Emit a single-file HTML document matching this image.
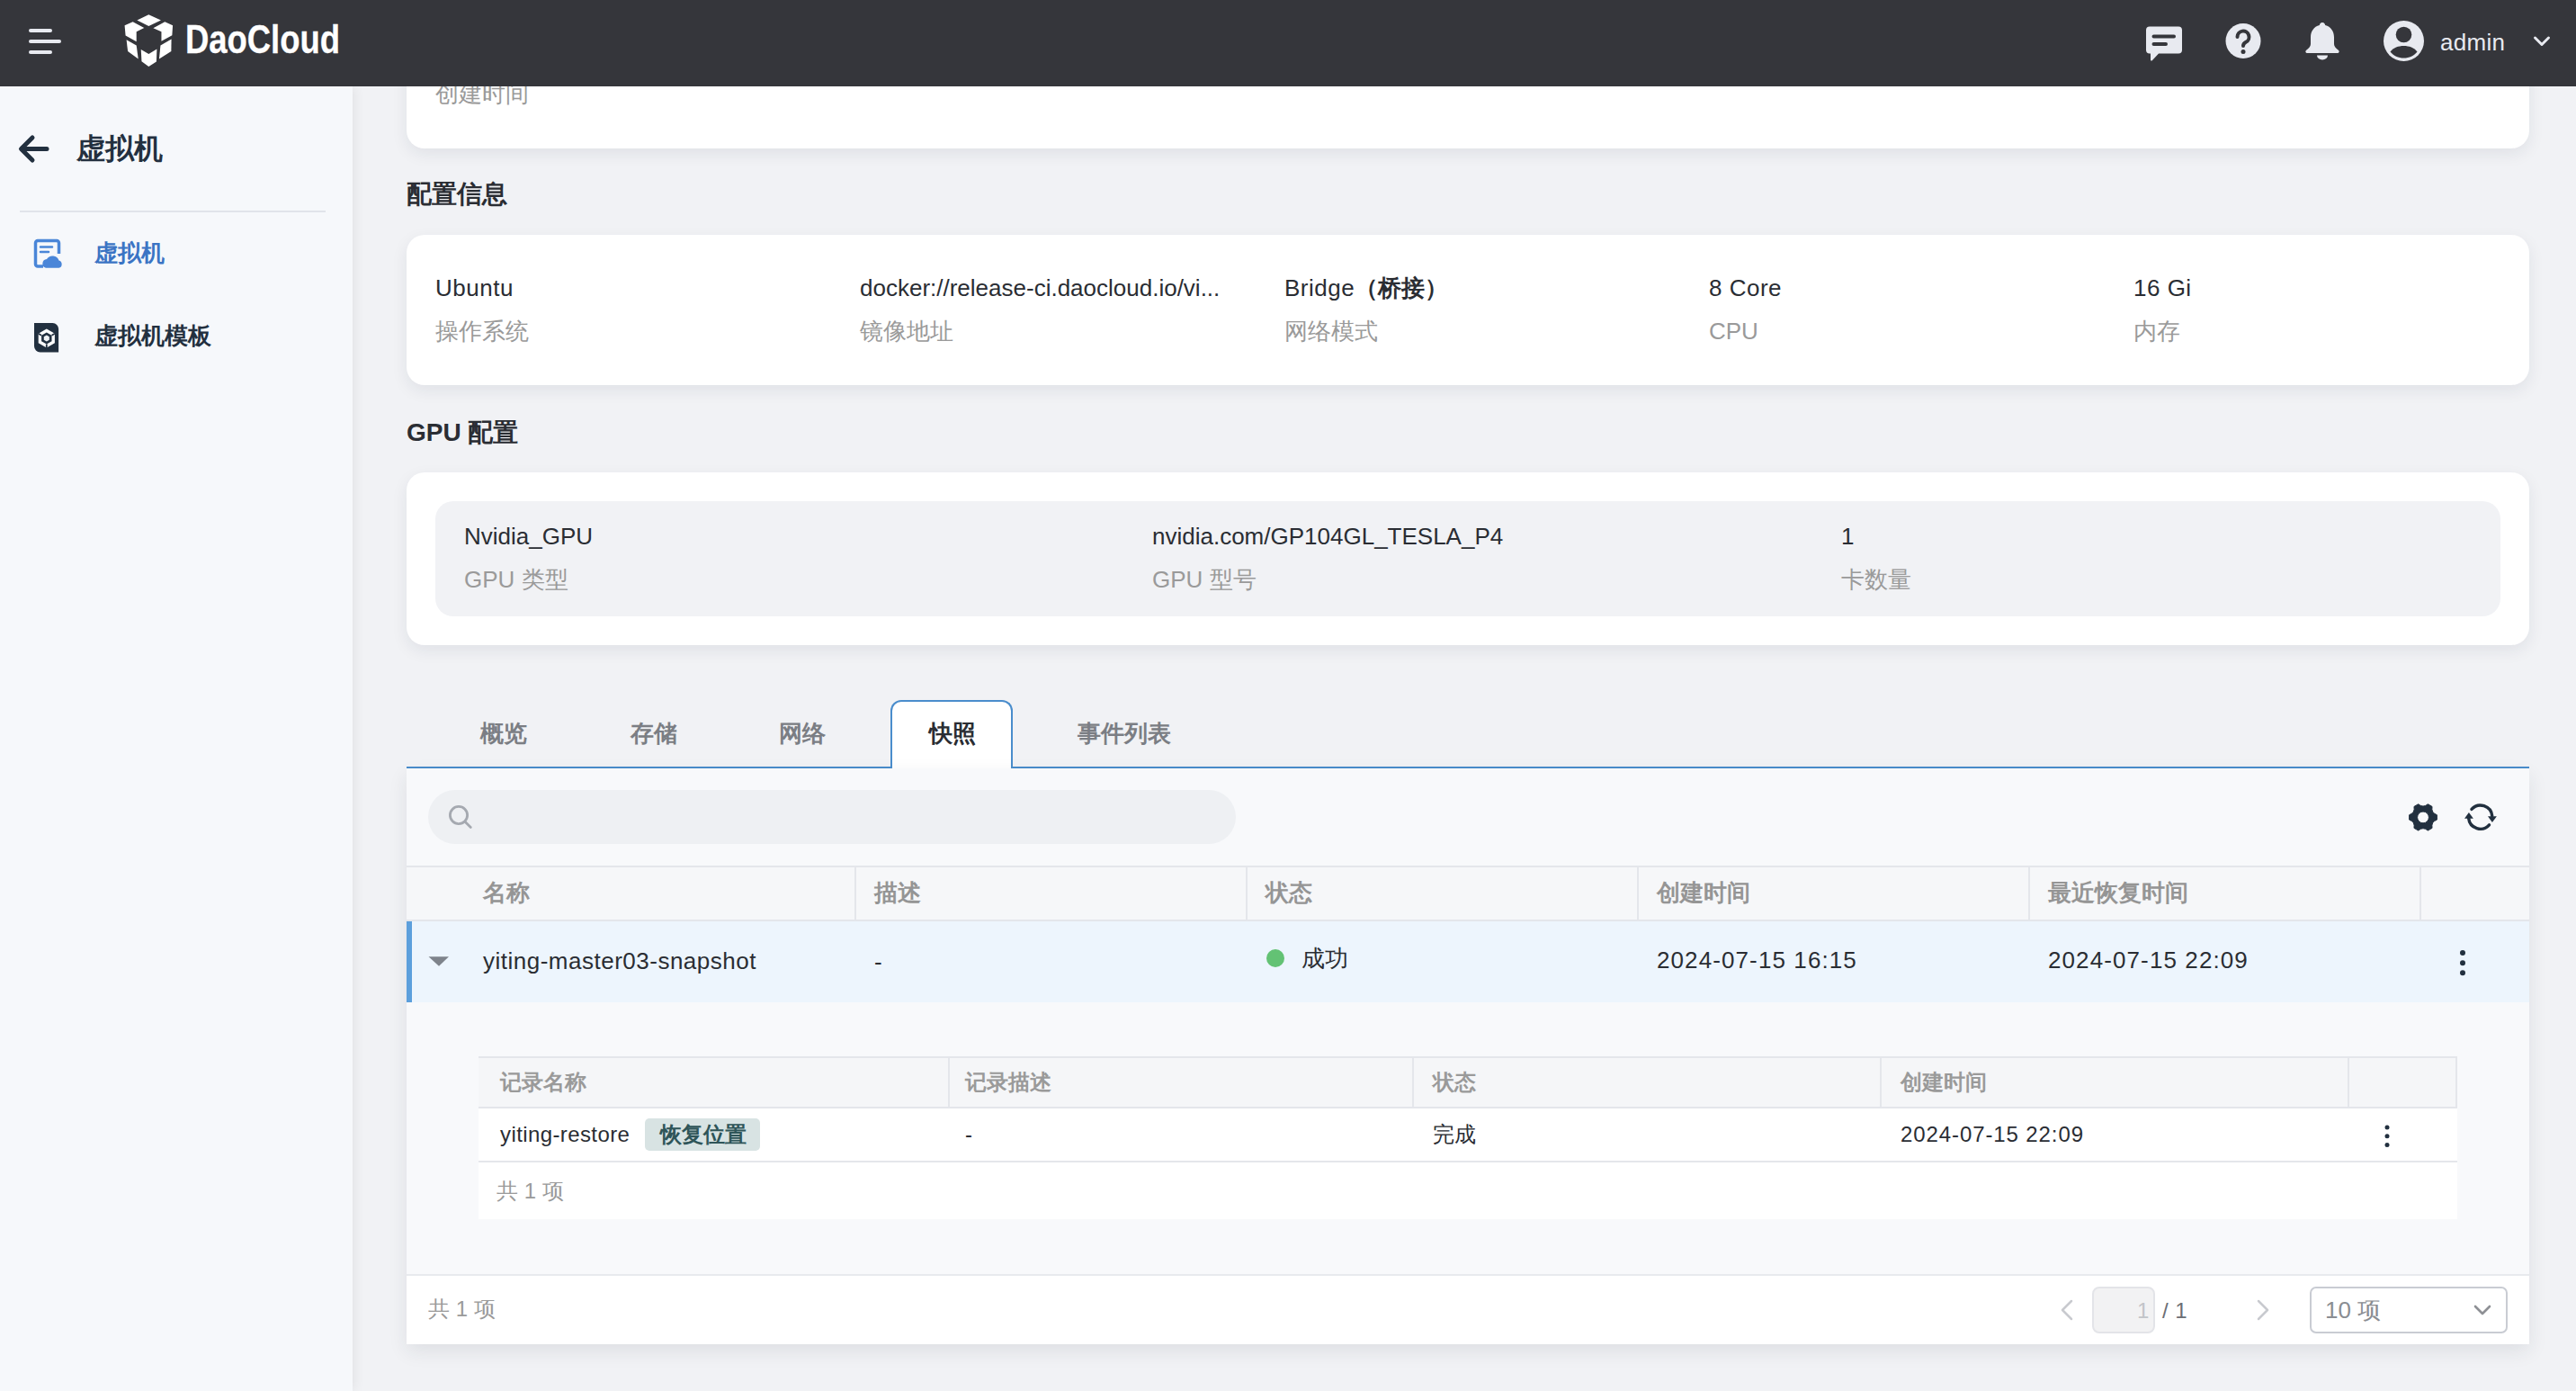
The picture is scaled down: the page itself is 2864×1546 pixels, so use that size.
<!DOCTYPE html>
<html><head><meta charset="utf-8">
<style>
*{box-sizing:border-box;margin:0;padding:0}
html,body{width:2864px;height:1546px;overflow:hidden}
body{position:relative;background:#f1f2f5;font-family:"Liberation Sans",sans-serif;color:#2a2d33}
.abs{position:absolute}
svg{position:absolute;overflow:visible}
#hdr{left:0;top:0;width:2864px;height:96px;background:#35363b;z-index:5}
#side{left:0;top:96px;width:392px;height:1450px;background:#f6f8fb;box-shadow:2px 0 12px rgba(0,0,0,.07);z-index:3}
.card{position:absolute;left:452px;width:2360px;background:#fff;border-radius:20px;box-shadow:0 6px 18px rgba(30,40,60,.08)}
.t{position:absolute;white-space:nowrap;line-height:1}
.title{font-size:28px;font-weight:bold;color:#2a2d33}
.val{font-size:26px;color:#2a2d33;letter-spacing:.5px}
.lab{font-size:26px;color:#9a9a9a}
.tab{position:absolute;top:802px;font-size:26px;font-weight:bold;color:#7b7e84;line-height:1;white-space:nowrap}
.th{position:absolute;font-size:26px;font-weight:bold;color:#959595;line-height:1;white-space:nowrap}
.td{position:absolute;font-size:26px;color:#2a2d33;line-height:1;white-space:nowrap}
</style></head>
<body>
<!-- HEADER -->
<div id="hdr" class="abs">
  <div class="abs" style="left:32px;top:32px;width:26px;height:4px;background:#e8eaf0;border-radius:2px"></div>
  <div class="abs" style="left:32px;top:44px;width:36px;height:4px;background:#e8eaf0;border-radius:2px"></div>
  <div class="abs" style="left:32px;top:56px;width:26px;height:4px;background:#e8eaf0;border-radius:2px"></div>
  <!-- logo cube -->
  <svg style="left:130px;top:10px" width="260" height="75" viewBox="0 0 2576 743">
    <g fill="#fff">
      <polygon points="222,125 350,62 485,125 350,188"/>
      <polygon points="85,182 175,140 300,208 215,250 215,358 95,292"/>
      <polygon points="400,210 528,142 615,182 608,290 490,355 490,250"/>
      <polygon points="105,340 215,402 235,550 120,465"/>
      <polygon points="600,332 480,402 465,550 598,465"/>
      <polygon points="265,445 350,495 440,440 435,580 350,635 272,578"/>
    </g>
  </svg>
  <svg style="left:206px;top:20px" width="174" height="50">
    <text x="0" y="39" font-family="Liberation Sans" font-weight="bold" font-size="45" fill="#fff" stroke="#fff" stroke-width="0.3" textLength="172" lengthAdjust="spacingAndGlyphs">DaoCloud</text>
  </svg>
  <!-- chat -->
  <svg style="left:2386px;top:29px" width="40" height="40" viewBox="0 0 40 40">
    <path d="M4 0.5h32a4 4 0 0 1 4 4v22a4 4 0 0 1-4 4H14l-7 7.5c-1 1-2 .5-2-.8V30.5H4a4 4 0 0 1-4-4v-22a4 4 0 0 1 4-4z" fill="#e8eaf0"/>
    <path d="M8.5 11.5H31M8.5 20H22" stroke="#35363b" stroke-width="4" stroke-linecap="round"/>
  </svg>
  <!-- help -->
  <svg style="left:2474px;top:26px" width="40" height="40" viewBox="0 0 40 40">
    <circle cx="20" cy="19.5" r="19.5" fill="#e8eaf0"/>
    <path d="M13.5 15a6.5 6.5 0 1 1 9.5 5.8c-2 1.1-3 2.2-3 4.2" fill="none" stroke="#35363b" stroke-width="4" stroke-linecap="round"/>
    <circle cx="20" cy="31.5" r="2.5" fill="#35363b"/>
  </svg>
  <!-- bell -->
  <svg style="left:2563px;top:25px" width="38" height="42" viewBox="0 0 38 42">
    <path d="M19 0c2 0 3 1.5 3.2 3C28.5 4.5 32 10 32 16.5v7.5c0 2.5 2 4.5 4.5 6.5 2 1.5 1.2 3.5-1 3.5H2.5c-2.2 0-3-2-1-3.5C4 28.5 6 26.5 6 24v-7.5C6 10 9.5 4.5 15.8 3 16 1.5 17 0 19 0z" fill="#e8eaf0"/>
    <path d="M13 36.5h12a6 5 0 0 1-12 0z" fill="#e8eaf0"/>
  </svg>
  <!-- user -->
  <svg style="left:2650px;top:23px" width="46" height="46" viewBox="0 0 46 46">
    <circle cx="22.5" cy="22.5" r="22.5" fill="#e8eaf0"/>
    <circle cx="22.5" cy="15.5" r="8.8" fill="#35363b"/>
    <path d="M7.5 34.5C11 30 16.5 28 22.5 28s11.5 2 15 6.5C34 39 28.5 41.5 22.5 41.5S11 39 7.5 34.5z" fill="#35363b"/>
  </svg>
  <div class="t" style="left:2713px;top:34px;font-size:26px;letter-spacing:.3px;color:#e8eaf0">admin</div>
  <svg style="left:2815px;top:38px" width="22" height="16" viewBox="0 0 22 16">
    <path d="M3.5 4l7.5 7.5L18.5 4" fill="none" stroke="#e8eaf0" stroke-width="3" stroke-linecap="round" stroke-linejoin="round"/>
  </svg>
</div>

<!-- SIDEBAR -->
<div id="side" class="abs">
  <svg style="left:15px;top:44px" width="60" height="50" viewBox="0 0 60 50">
    <path d="M21 13L8.5 25.5 21 38M9 25.5h28" fill="none" stroke="#22303f" stroke-width="5" stroke-linecap="round" stroke-linejoin="round"/>
  </svg>
  <div class="t" style="left:85px;top:53px;font-size:32px;font-weight:bold;color:#23303f">虚拟机</div>
  <div class="abs" style="left:22px;top:138px;width:340px;height:2px;background:#e1e4ea"></div>
  <svg style="left:38px;top:170px" width="30" height="32" viewBox="0 0 30 32">
    <path d="M10 30H4a2.5 2.5 0 0 1-2.5-2.5V4A2.5 2.5 0 0 1 4 1.5h21A2.5 2.5 0 0 1 27.5 4v12" fill="none" stroke="#4a86d8" stroke-width="3.5"/>
    <path d="M7 8.5h13M7 14h9" stroke="#4a86d8" stroke-width="2.5" stroke-linecap="round"/>
    <path d="M13 31.8a5 5 0 0 1 1-9.8 7.5 7.5 0 0 1 13.5 1.5 4.3 4.3 0 0 1 0 8.3z" fill="#4a86d8"/>
  </svg>
  <div class="t" style="left:105px;top:172px;font-size:26px;font-weight:bold;color:#3b74c4">虚拟机</div>
  <svg style="left:38.2px;top:262.5px" width="28" height="34" viewBox="0 0 28 34">
    <path d="M0 0h20.5a6.6 6.6 0 0 1 6.6 6.6V32.4H6.6A6.6 6.6 0 0 1 0 25.8z" fill="#22303f"/>
    <polygon points="13.80,6.50 22.89,11.75 22.89,22.25 13.80,27.50 4.71,22.25 4.71,11.75" fill="#fff"/>
    <polygon points="13.80,10.40 19.52,13.70 19.52,20.30 13.80,23.60 8.08,20.30 8.08,13.70" fill="#22303f"/>
    <polygon points="13.80,13.50 16.83,15.25 16.83,18.75 13.80,20.50 10.77,18.75 10.77,15.25" fill="#f1f3f6"/>
    <path d="M13.8 23.6V28M8.08 13.70L4.71 11.75M19.52 13.70L22.89 11.75" stroke="#22303f" stroke-width="1.8"/>
  </svg>
  <div class="t" style="left:105px;top:264px;font-size:26px;font-weight:bold;color:#23303f">虚拟机模板</div>
</div>

<!-- CARDS -->
<div class="card" style="top:40px;height:125px">
  <div class="t lab" style="left:32px;top:51px">创建时间</div>
</div>
<div class="t title" style="left:452px;top:202px">配置信息</div>
<div class="card" style="top:261px;height:167px">
  <div class="t val" style="left:32px;top:46px">Ubuntu</div>
  <div class="t lab" style="left:32px;top:94px">操作系统</div>
  <div class="t val" style="left:504px;top:46px;letter-spacing:0">docker://release-ci.daocloud.io/vi...</div>
  <div class="t lab" style="left:504px;top:94px">镜像地址</div>
  <div class="t val" style="left:976px;top:46px">Bridge<span style="font-weight:bold;letter-spacing:0">（桥接）</span></div>
  <div class="t lab" style="left:976px;top:94px">网络模式</div>
  <div class="t val" style="left:1448px;top:46px">8 Core</div>
  <div class="t lab" style="left:1448px;top:94px">CPU</div>
  <div class="t val" style="left:1920px;top:46px">16 Gi</div>
  <div class="t lab" style="left:1920px;top:94px">内存</div>
</div>
<div class="t title" style="left:452px;top:467px">GPU 配置</div>
<div class="card" style="top:525px;height:192px">
  <div class="abs" style="left:32px;top:32px;width:2296px;height:128px;background:#f1f2f5;border-radius:20px"></div>
  <div class="t val" style="left:64px;top:58px;letter-spacing:0">Nvidia_GPU</div>
  <div class="t lab" style="left:64px;top:106px">GPU 类型</div>
  <div class="t val" style="left:829px;top:58px;letter-spacing:0">nvidia.com/GP104GL_TESLA_P4</div>
  <div class="t lab" style="left:829px;top:106px">GPU 型号</div>
  <div class="t val" style="left:1595px;top:58px">1</div>
  <div class="t lab" style="left:1595px;top:106px">卡数量</div>
</div>

<!-- TABS -->
<div class="abs" style="left:452px;top:852px;width:2360px;height:2px;background:#4a8dcc"></div>
<div class="abs" style="left:990px;top:778px;width:136px;height:76px;background:#fff;border:2px solid #4a8dcc;border-bottom:none;border-radius:12px 12px 0 0"></div>
<div class="tab" style="left:534px">概览</div>
<div class="tab" style="left:701px">存储</div>
<div class="tab" style="left:866px">网络</div>
<div class="tab" style="left:1033px;color:#2a2d33">快照</div>
<div class="tab" style="left:1198px">事件列表</div>

<!-- PANEL -->
<div id="panel" class="abs" style="left:452px;top:854px;width:2360px;height:640px;background:#f8f9fb;box-shadow:0 8px 20px rgba(30,40,60,.09)">
  <div class="abs" style="left:24px;top:24px;width:898px;height:60px;background:#eef0f3;border-radius:30px"></div>
  <svg style="left:44px;top:40px" width="32" height="32" viewBox="0 0 32 32">
    <circle cx="14" cy="12" r="9.6" fill="none" stroke="#a5a9b0" stroke-width="2.8"/>
    <path d="M21 19.2l6.3 6.3" stroke="#a5a9b0" stroke-width="2.8" stroke-linecap="round"/>
  </svg>
  <!-- gear -->
  <svg style="left:2226px;top:39px" width="32" height="32" viewBox="0 0 32 32">
    <path fill="#22303f" fill-rule="evenodd" stroke="#22303f" stroke-width="1" stroke-linejoin="round" d="M31.36 12.69 L31.36 18.11 Q24.66 20.40 26.03 27.35 L21.34 30.06 Q16.00 25.40 10.66 30.06 L5.97 27.35 Q7.34 20.40 0.64 18.11 L0.64 12.69 Q7.34 10.40 5.97 3.45 L10.66 0.74 Q16.00 5.40 21.34 0.74 L26.03 3.45 Q24.66 10.40 31.36 12.69Z M22.4 15.4A6.4 6.4 0 1 0 9.6 15.4A6.4 6.4 0 1 0 22.4 15.4Z"/>
  </svg>
  <!-- refresh -->
  <svg style="left:2288px;top:39px" width="36" height="32" viewBox="0 0 36 32">
    <path d="M7.96 6.38A13.1 13.1 0 0 1 30.73 13.78" fill="none" stroke="#22303f" stroke-width="3.4" stroke-linecap="round"/>
    <path d="M27.51 23.83A13.1 13.1 0 0 1 4.67 16.52" fill="none" stroke="#22303f" stroke-width="3.4" stroke-linecap="round"/>
    <path d="M0 16.8h9.9l-5-6.8z" fill="#22303f"/>
    <path d="M26 14.3h9.9l-5 6.7z" fill="#22303f"/>
  </svg>
  <!-- table header -->
  <div class="abs" style="left:0;top:108px;width:2360px;height:62px;background:#f6f7f9;border-top:2px solid #e4e6eb;border-bottom:2px solid #e4e6eb"></div>
  <div class="abs" style="left:498px;top:110px;width:2px;height:58px;background:#e4e6eb"></div>
  <div class="abs" style="left:933px;top:110px;width:2px;height:58px;background:#e4e6eb"></div>
  <div class="abs" style="left:1368px;top:110px;width:2px;height:58px;background:#e4e6eb"></div>
  <div class="abs" style="left:1803px;top:110px;width:2px;height:58px;background:#e4e6eb"></div>
  <div class="abs" style="left:2238px;top:110px;width:2px;height:58px;background:#e4e6eb"></div>
  <div class="th" style="left:85px;top:125px">名称</div>
  <div class="th" style="left:520px;top:125px">描述</div>
  <div class="th" style="left:955px;top:125px">状态</div>
  <div class="th" style="left:1390px;top:125px">创建时间</div>
  <div class="th" style="left:1825px;top:125px">最近恢复时间</div>
  <!-- main row -->
  <div class="abs" style="left:0;top:170px;width:2360px;height:90px;background:#edf5fd"></div>
  <div class="abs" style="left:0;top:170px;width:6px;height:90px;background:#5c9fdc"></div>
  <svg style="left:24px;top:208px" width="24" height="12" viewBox="0 0 24 12"><path d="M0.5 1.2h22.5l-11 10.6z" fill="#7e838b"/></svg>
  <div class="td" style="left:85px;top:201px;letter-spacing:.5px">yiting-master03-snapshot</div>
  <div class="td" style="left:520px;top:202px">-</div>
  <svg style="left:956px;top:201px" width="20" height="20" viewBox="0 0 20 20"><circle cx="10" cy="10" r="10" fill="#63c274"/></svg>
  <div class="td" style="left:995px;top:198px">成功</div>
  <div class="td" style="left:1390px;top:200px;letter-spacing:1.1px">2024-07-15 16:15</div>
  <div class="td" style="left:1825px;top:200px;letter-spacing:1.1px">2024-07-15 22:09</div>
  <svg style="left:2280px;top:201px" width="12" height="30" viewBox="0 0 12 30"><circle cx="6" cy="4" r="3" fill="#22303f"/><circle cx="6" cy="15.2" r="3" fill="#22303f"/><circle cx="6" cy="26.3" r="3" fill="#22303f"/></svg>
  <!-- sub table -->
  <div class="abs" style="left:80px;top:320px;width:2200px;height:58px;background:#f5f6f8;border-top:2px solid #e4e6eb;border-bottom:2px solid #e4e6eb;border-right:2px solid #e4e6eb"></div>
  <div class="abs" style="left:602px;top:322px;width:2px;height:54px;background:#e4e6eb"></div>
  <div class="abs" style="left:1118px;top:322px;width:2px;height:54px;background:#e4e6eb"></div>
  <div class="abs" style="left:1638px;top:322px;width:2px;height:54px;background:#e4e6eb"></div>
  <div class="abs" style="left:2158px;top:322px;width:2px;height:54px;background:#e4e6eb"></div>
  <div class="abs" style="left:80px;top:378px;width:2200px;height:60px;background:#fff;border-bottom:2px solid #e4e6eb"></div>
  <div class="abs" style="left:80px;top:438px;width:2200px;height:63px;background:#fff"></div>
  <div class="th" style="left:104px;top:337px;font-size:24px;color:#9a9a9a">记录名称</div>
  <div class="th" style="left:621px;top:337px;font-size:24px;color:#9a9a9a">记录描述</div>
  <div class="th" style="left:1141px;top:337px;font-size:24px;color:#9a9a9a">状态</div>
  <div class="th" style="left:1661px;top:337px;font-size:24px;color:#9a9a9a">创建时间</div>
  <div class="td" style="left:104px;top:395px;font-size:24px;letter-spacing:.4px">yiting-restore</div>
  <div class="abs" style="left:265px;top:389px;width:128px;height:36px;background:#d8e3e3;border-radius:5px"></div>
  <div class="td" style="left:282px;top:395px;font-size:24px;font-weight:bold;color:#2f5559">恢复位置</div>
  <div class="td" style="left:621px;top:395px;font-size:24px">-</div>
  <div class="td" style="left:1141px;top:395px;font-size:24px">完成</div>
  <div class="td" style="left:1661px;top:395px;font-size:24px;letter-spacing:.9px">2024-07-15 22:09</div>
  <svg style="left:2196px;top:393px" width="12" height="30" viewBox="0 0 12 30"><circle cx="6" cy="6" r="2.5" fill="#22303f"/><circle cx="6" cy="15.8" r="2.5" fill="#22303f"/><circle cx="6" cy="25.5" r="2.5" fill="#22303f"/></svg>
  <div class="td" style="left:100px;top:458px;font-size:24px;color:#9a9a9a">共 1 项</div>
  <!-- footer -->
  <div class="abs" style="left:0;top:562px;width:2360px;height:78px;background:#fff;border-top:2px solid #e8eaee"></div>
  <div class="td" style="left:24px;top:589px;font-size:24px;color:#9a9a9a">共 1 项</div>
  <svg style="left:1838px;top:590px" width="16" height="24" viewBox="0 0 16 24"><path d="M13 2L3 12l10 10" fill="none" stroke="#c8cacf" stroke-width="2.5" stroke-linecap="round" stroke-linejoin="round"/></svg>
  <div class="abs" style="left:1874px;top:576px;width:70px;height:52px;background:#f2f2f3;border:2px solid #e3e4e8;border-radius:8px"></div>
  <div class="td" style="left:1924px;top:591px;font-size:24px;color:#c2c4c8">1</div>
  <div class="td" style="left:1952px;top:591px;font-size:24px;letter-spacing:.5px;color:#6b6e74">/ 1</div>
  <svg style="left:2056px;top:590px" width="16" height="24" viewBox="0 0 16 24"><path d="M3 2l10 10L3 22" fill="none" stroke="#c8cacf" stroke-width="2.5" stroke-linecap="round" stroke-linejoin="round"/></svg>
  <div class="abs" style="left:2116px;top:576px;width:220px;height:52px;background:#fff;border:2px solid #c9ccd3;border-radius:7px"></div>
  <div class="td" style="left:2133px;top:589px;font-size:26px;color:#8a8d92">10 项</div>
  <svg style="left:2297px;top:595px" width="22" height="14" viewBox="0 0 22 14"><path d="M3 3l8 8 8-8" fill="none" stroke="#8e9095" stroke-width="2.6" stroke-linecap="round" stroke-linejoin="round"/></svg>
</div>
</body></html>
